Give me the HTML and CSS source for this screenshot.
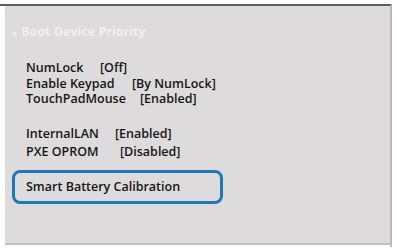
FILE: index.html
```html
<!DOCTYPE html>
<html>
<head>
<meta charset="utf-8">
<link rel="stylesheet" href="styles.css">
</head>
<body>
<div class="frame">
  <div class="panel">
    <div class="submenu"><span class="arrow">&#9656;</span> Boot Device Priority</div>
    <div class="group">
      <div class="row"><span class="label w1">NumLock</span><span>[Off]</span></div>
      <div class="row"><span class="label w2">Enable Keypad</span><span>[By NumLock]</span></div>
      <div class="row"><span class="label w3">TouchPadMouse</span><span>[Enabled]</span></div>
    </div>
    <div class="group g2">
      <div class="row"><span class="label w4">InternalLAN</span><span>[Enabled]</span></div>
      <div class="row"><span class="label w5">PXE OPROM</span><span>[Disabled]</span></div>
    </div>
    <div class="highlight">Smart Battery Calibration</div>
  </div>
</div>
</body>
</html>
```
FILE: styles.css
```css
html, body {
  margin: 0;
  padding: 0;
  background: #ffffff;
}
.frame {
  margin-top: 4px;
  width: 392px;
  height: 243px;
  border-top: 2px solid #5e5e5e;
  border-right: 2px solid #bdb9ba;
  box-sizing: border-box;
  display: flex;
}
.panel {
  margin-left: 5px;
  flex: 1;
  height: 239px;
  background: #dedbdc;
  border-bottom: 2px solid #c4c0c1;
  font-family: "Open Sans", "Liberation Sans", sans-serif;
  font-weight: 600;
  font-size: 12.5px;
  color: #161616;
  padding-top: 18px;
  box-sizing: border-box;
}
.submenu {
  color: #efeeee;
  font-size: 12.5px;
  font-weight: 700;
  padding-left: 8px;
  line-height: 16px;
}
.arrow {
  font-size: 9px;
}
.group {
  margin-top: 19px;
  padding-left: 21px;
  line-height: 15.5px;
}
.g2 {
  margin-top: 18px;
  line-height: 18px;
}
.row {
  display: flex;
  white-space: nowrap;
}
.w1 { width: 74px; }
.w2 { width: 106px; }
.w3 { width: 114px; }
.w4 { width: 89px; }
.w5 { width: 94px; }
.highlight {
  margin-top: 9px;
  margin-left: 7px;
  width: 211px;
  height: 34px;
  box-sizing: border-box;
  border: 3px solid #1f78b6;
  border-radius: 8px;
  padding-left: 11px;
  line-height: 28px;
  font-size: 12.5px;
}
```
